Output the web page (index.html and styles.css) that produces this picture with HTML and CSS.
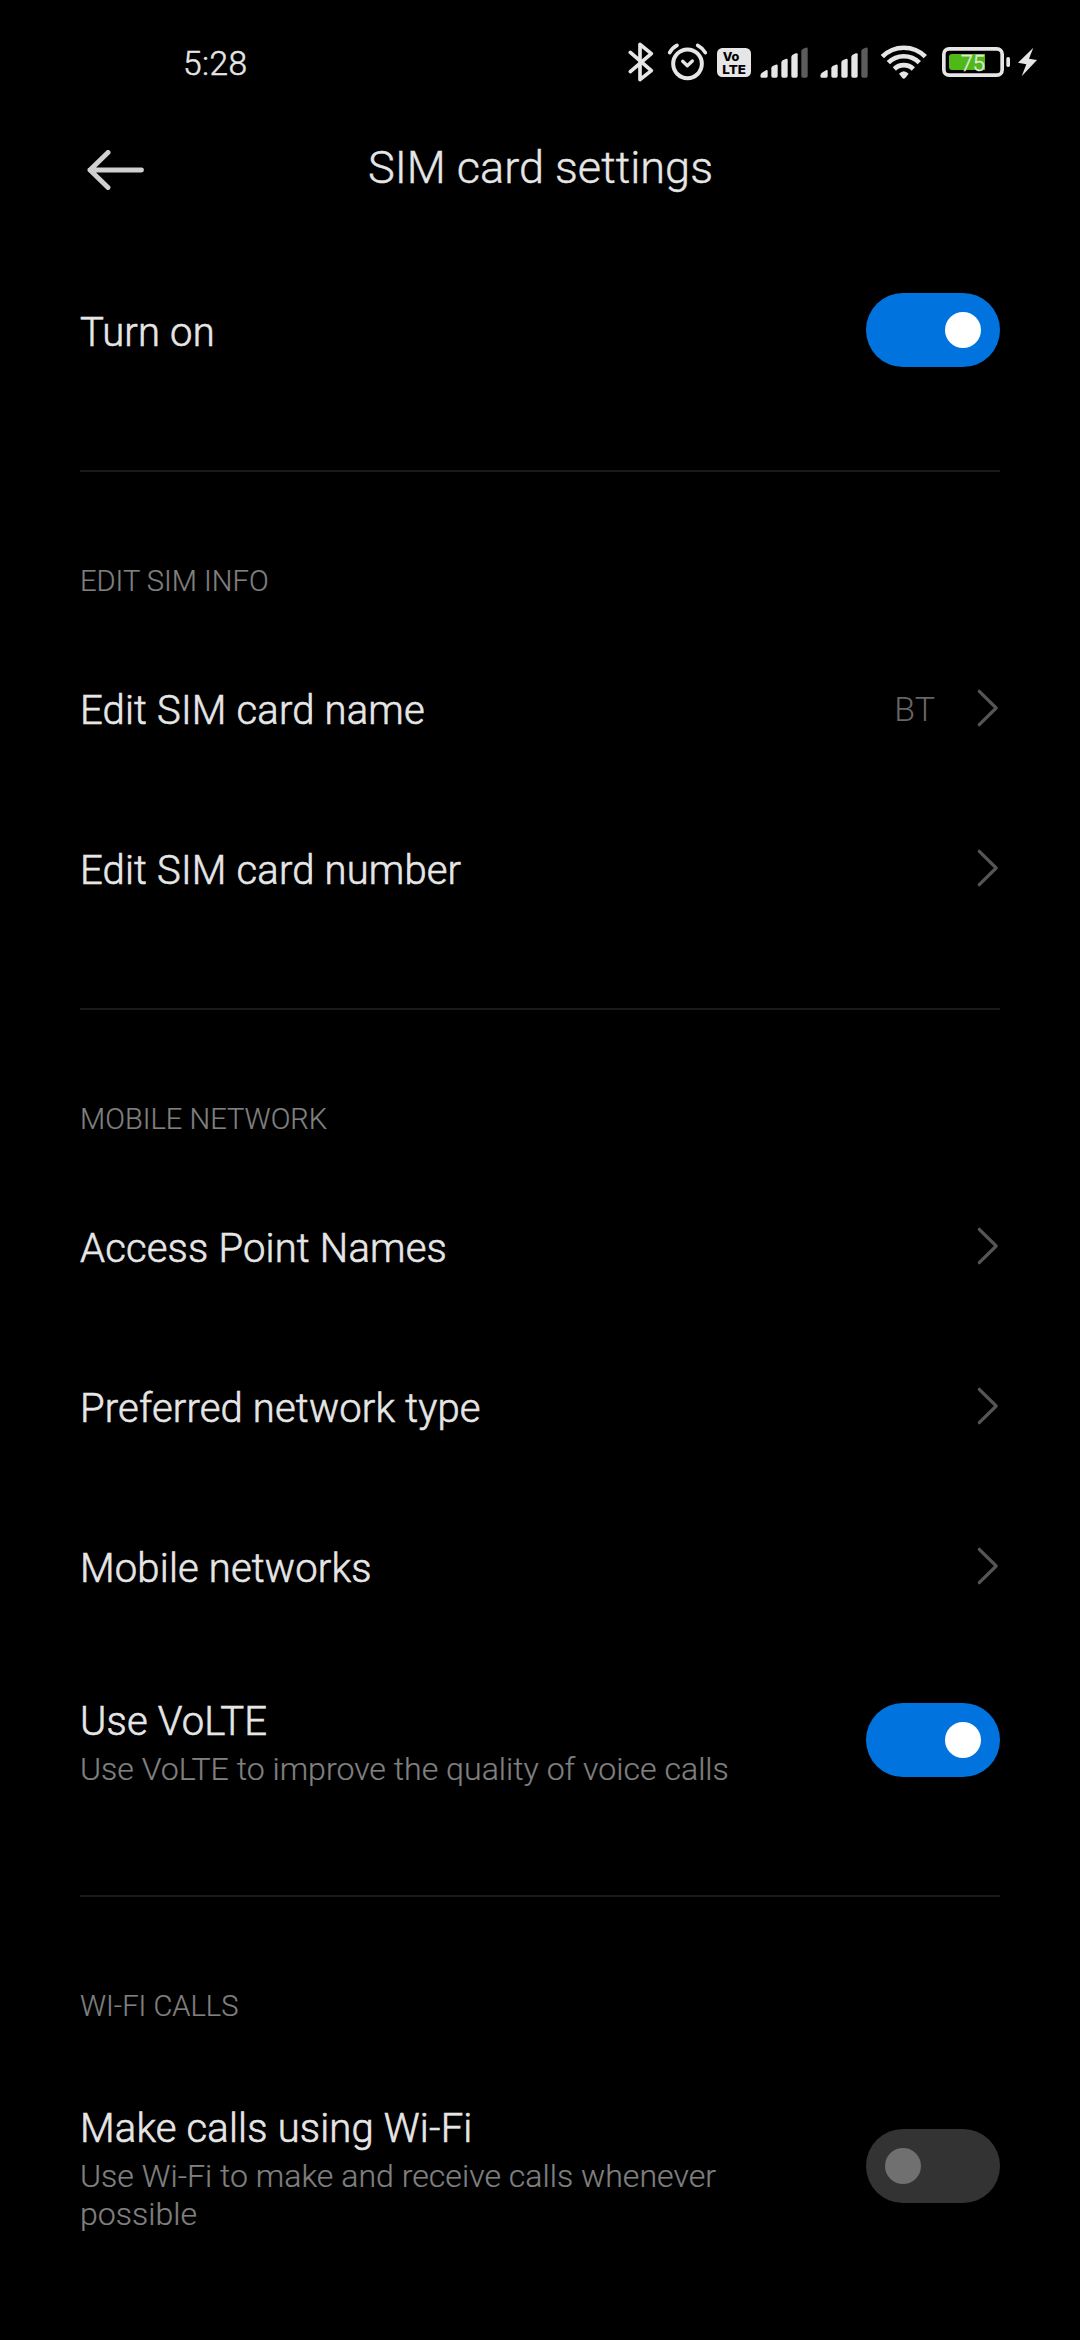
FILE: index.html
```
<!DOCTYPE html>
<html lang="en">
<head>
<meta charset="utf-8">
<title>SIM card settings</title>
<link rel="stylesheet" href="styles.css">
</head>
<body>
<svg class="defs" width="0" height="0">
  <symbol id="chevron" viewBox="0 0 24 40"><path d="M3.300 3.300 20.200 20 3.300 36.700" fill="none" stroke="#555" stroke-width="3.200" stroke-linecap="round" stroke-linejoin="round"/></symbol>
  <symbol id="signal" viewBox="0 0 144 195">
    <g fill="#e6e6e6">
      <path d="M1 138q0-7 7-11l10-6q5-2 5 2v16q0 4-4 4H5q-4 0-4-5z"/>
      <path d="M34 115q0-5 4-7l9-4q6-2 6 3v31q0 5-5 5h-9q-5 0-5-5z"/>
      <path d="M64 98q0-5 4-7l9-4q6-2 6 3v48q0 5-5 5h-9q-5 0-5-5z"/>
      <path d="M94 81q0-5 4-7l9-4q6-2 6 3v65q0 5-5 5h-9q-5 0-5-5z"/>
    </g>
    <path fill="#5c5c5c" d="M124 64q0-5 4-7l9-4q6-2 6 3v82q0 5-5 5h-9q-5 0-5-5z"/>
  </symbol>
</svg>

<header class="status-bar">
  <time class="clock">5:28</time>
  <div class="status-icons">
    <svg class="bluetooth" viewBox="54 0 78 195"><path d="M61 67 124 122 90 149V43l34 28-63 54" fill="none" stroke="#e6e6e6" stroke-width="11" stroke-linecap="round" stroke-linejoin="round"/></svg>
    <svg class="alarm" viewBox="171 0 123 195"><g fill="none" stroke="#e6e6e6" stroke-linecap="round" stroke-linejoin="round"><circle cx="232.500" cy="101.500" r="43" stroke-width="12"/><path d="m218 94 14 13 15-14" stroke-width="10"/><path d="M179 68q7-14 22-22M263 46q15 8 23 22" stroke-width="11"/></g></svg>
    <svg class="volte" viewBox="321 0 102 195"><rect x="321" y="54" width="102" height="87" rx="16" fill="#e6e6e6"/><g class="volte-text"><text x="338" y="94" textLength="50" lengthAdjust="spacingAndGlyphs">Vo</text><text x="337" y="131" textLength="71" lengthAdjust="spacingAndGlyphs">LTE</text></g></svg>
    <svg class="signal"><use href="#signal"/></svg>
    <svg class="signal second"><use href="#signal"/></svg>
    <svg class="wifi" viewBox="180 0 144 195"><g fill="none" stroke="#e6e6e6" stroke-width="14"><path d="M187 80a91 91 0 0 1 129 0"/><path d="M205 98a66 66 0 0 1 93 0"/><path d="M223 117a41 41 0 0 1 57 0"/></g><path d="M237 131q14-15 29 0l-10 13q-5 5-9 0z" fill="#e6e6e6"/></svg>
    <svg class="battery" viewBox="366 0 204 195"><rect x="371.500" y="56.500" width="175" height="79" rx="16" fill="none" stroke="#e6e6e6" stroke-width="11"/><path d="M396 72H495V120H396q-9 0-9-9V81q0-9 9-9z" fill="#4eb917"/><rect x="559" y="81" width="11" height="30" rx="5" fill="#e6e6e6"/><text class="battery-text" x="422" y="122">75</text></svg>
    <svg class="bolt" viewBox="594 0 57 195"><path d="M640 53 594 98 619 103 605 139 651 90 627 86z" fill="#e6e6e6"/></svg>
  </div>
</header>

<nav class="title-bar">
  <svg class="back" viewBox="0 0 58 40"><path d="M2.800 20H54.500M21 2.500 3 20l18 17.500" fill="none" stroke="#d0d0d0" stroke-width="4.900" stroke-linecap="round" stroke-linejoin="round"/></svg>
  <h1 class="title">SIM card settings</h1>
</nav>

<main class="settings">
  <section class="group">
    <div class="row"><div class="text"><p class="label">Turn on</p></div><span class="toggle on"></span></div>
  </section>
  <section class="group">
    <h2 class="heading">EDIT SIM INFO</h2>
    <div class="row"><div class="text"><p class="label">Edit SIM card name</p></div><span class="value">BT</span><svg class="chevron"><use href="#chevron"/></svg></div>
    <div class="row"><div class="text"><p class="label">Edit SIM card number</p></div><svg class="chevron"><use href="#chevron"/></svg></div>
  </section>
  <section class="group">
    <h2 class="heading">MOBILE NETWORK</h2>
    <div class="row"><div class="text"><p class="label">Access Point Names</p></div><svg class="chevron"><use href="#chevron"/></svg></div>
    <div class="row"><div class="text"><p class="label">Preferred network type</p></div><svg class="chevron"><use href="#chevron"/></svg></div>
    <div class="row"><div class="text"><p class="label">Mobile networks</p></div><svg class="chevron"><use href="#chevron"/></svg></div>
    <div class="row two-line"><div class="text"><p class="label">Use VoLTE</p><p class="summary">Use VoLTE to improve the quality of voice calls</p></div><span class="toggle on"></span></div>
  </section>
  <section class="group">
    <h2 class="heading">WI-FI CALLS</h2>
    <div class="row three-line"><div class="text"><p class="label">Make calls using Wi-Fi</p><p class="summary">Use Wi-Fi to make and receive calls whenever possible</p></div><span class="toggle"></span></div>
  </section>
</main>
</body>
</html>
```
FILE: styles.css
```
* { box-sizing: border-box; }
body { margin: 0; height: 2340px; overflow: hidden; background: #000; color: #e6e6e6; font-family: Roboto, sans-serif; font-weight: 300; }
h1, h2, p { margin: 0; }
svg { display: block; flex: none; }
.defs { display: none; }

.status-bar { display: flex; justify-content: space-between; height: 95px; padding: 30px 43px 0 183px; }
.clock { padding-top: 14px; font-size: 33.5px; line-height: 40px; letter-spacing: 0.4px; -webkit-text-stroke: 0.5px; }
.status-icons { display: flex; height: 65px; }
.status-icons svg { height: 65px; }
.bluetooth { width: 26px; }
.alarm { width: 41px; margin-left: 13px; }
.volte { width: 34px; margin-left: 9px; }
.signal { width: 48px; margin-left: 9px; }
.signal.second { margin-left: 12px; }
.wifi { width: 48px; margin-left: 12px; }
.battery { width: 68px; margin-left: 14px; }
.bolt { width: 19px; margin-left: 8px; }
.volte-text { fill: #000; font: 800 37px Inter, sans-serif; }
.battery-text { fill: #e6e6e6; stroke: #e6e6e6; stroke-width: 1px; font-size: 66px; font-weight: 300; }

.title-bar { display: grid; grid-template-columns: 120px 1fr 120px; align-items: center; height: 144px; padding: 0 87px; }
.back { width: 58px; height: 40px; margin-top: 6px; }
.title { padding: 2px 0 0 1px; text-align: center; font-size: 45.1px; line-height: 60px; font-weight: 300; -webkit-text-stroke: 0.4px; }

.settings { padding: 11px 80px 0; }
.group { padding-bottom: 60px; border-bottom: 2px solid #1a1a1a; }
.group:last-child { border-bottom: 0; }
.heading { height: 156px; padding-top: 89px; font-size: 29.1px; line-height: 40px; font-weight: 300; color: #808080; -webkit-text-stroke: 0.2px; }
.row { display: flex; align-items: center; height: 160px; }
.two-line { height: 189px; padding-bottom: 1px; }
.three-line { height: 226px; }
.text { flex: 1; padding-top: 6px; }
.two-line .text, .three-line .text { padding-top: 4px; }
.label { font-size: 40px; line-height: 52px; letter-spacing: 0.17px; -webkit-text-stroke: 0.6px; }
.summary { max-width: 700px; margin-top: 2px; font-size: 32.1px; line-height: 38px; color: #808080; -webkit-text-stroke: 0.2px; }
.value { padding-top: 2px; margin-right: 41px; font-size: 34px; line-height: 40px; color: #666; }
.chevron { width: 24px; height: 40px; }

.toggle { display: flex; align-items: center; flex: none; width: 134px; height: 74px; padding: 0 19px; border-radius: 37px; background: #333; }
.toggle::before { content: ""; width: 36px; height: 36px; border-radius: 50%; background: #707070; }
.toggle.on { justify-content: flex-end; background: #0073de; }
.toggle.on::before { background: #fff; }
```
